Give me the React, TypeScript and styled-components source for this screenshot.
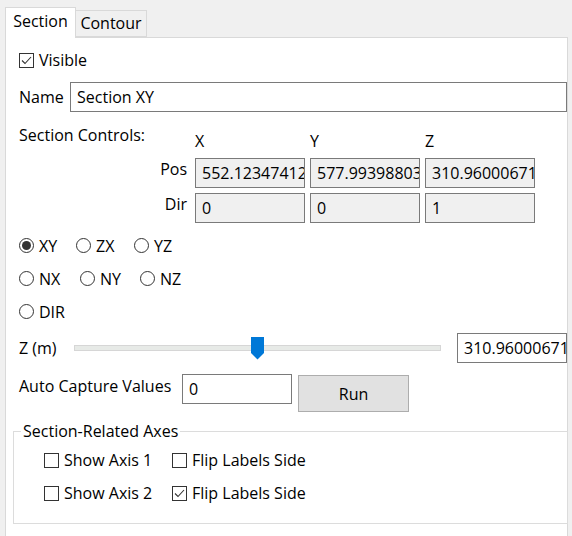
import React, { useState } from "react";
import styled, { createGlobalStyle } from "styled-components";

const GlobalStyle = createGlobalStyle`
  html, body {
    margin: 0;
    padding: 0;
    background: #f0f0f0;
    overflow: hidden;
  }
  body {
    font-family: "Open Sans", "Noto Sans", "Liberation Sans", sans-serif;
    font-size: 16px;
    color: #000;
  }
  * { box-sizing: border-box; }
`;

const Frame = styled.div`
  padding: 7px 0 0 5px;
  width: 568px;
`;

const TabStrip = styled.div`
  display: flex;
  align-items: flex-end;
  height: 30px;
  position: relative;
  z-index: 1;
`;

const Tab = styled.div<{ active?: boolean }>`
  width: 71px;
  height: ${(p) => (p.active ? "31px" : "27px")};
  margin-bottom: ${(p) => (p.active ? "-1px" : "0")};
  border: 1px solid #d9d9d9;
  border-bottom: ${(p) => (p.active ? "none" : "1px solid #d9d9d9")};
  border-left: ${(p) => (p.active ? "1px solid #d9d9d9" : "none")};
  background: ${(p) => (p.active ? "#fff" : "#f0f0f0")};
  display: flex;
  justify-content: center;
  padding-top: ${(p) => (p.active ? "2px" : "1px")};
  line-height: 22px;
`;

const Page = styled.div`
  background: #fff;
  border: 1px solid #d9d9d9;
  height: 520px;
  padding: 11px 0 0 13px;
`;

const Row = styled.div<{ h?: number; mt?: number }>`
  display: flex;
  align-items: center;
  height: ${(p) => p.h ?? 22}px;
  margin-top: ${(p) => p.mt ?? 0}px;
`;

const CheckItem = styled.label<{ w?: number }>`
  display: flex;
  align-items: center;
  gap: 5px;
  height: 22px;
  width: ${(p) => (p.w ? `${p.w}px` : "auto")};
  line-height: 22px;
`;

const Box = styled.span`
  width: 15px;
  height: 15px;
  border: 1px solid #333;
  background: #fff;
  display: flex;
  align-items: center;
  justify-content: center;
`;

const RadioItem = styled.label<{ w: number }>`
  display: flex;
  align-items: center;
  gap: 5px;
  width: ${(p) => p.w}px;
  line-height: 22px;
`;

const Circle = styled.span<{ on?: boolean }>`
  width: 15px;
  height: 15px;
  border-radius: 50%;
  border: 1px solid #333;
  display: flex;
  align-items: center;
  justify-content: center;
  &::after {
    content: "";
    width: 9px;
    height: 9px;
    border-radius: 50%;
    background: ${(p) => (p.on ? "#333" : "transparent")};
  }
`;

const Label = styled.span<{ w?: number }>`
  line-height: 22px;
  white-space: nowrap;
  ${(p) => (p.w ? `width: ${p.w}px; flex-shrink: 0;` : "")}
`;

const TextBox = styled.input<{ w?: number }>`
  font: inherit;
  color: #000;
  height: 30px;
  width: ${(p) => (p.w ? `${p.w}px` : "100%")};
  border: 1px solid #7a7a7a;
  background: ${(p) => (p.readOnly ? "#f0f0f0" : "#fff")};
  padding: 0 0 0 6px;
  outline: none;
  margin: 0;
  min-width: 0;
`;

const ControlsGrid = styled.div`
  display: grid;
  grid-template-columns: 171px 110px 110px 110px;
  grid-template-rows: 29px 30px 30px;
  column-gap: 5px;
  row-gap: 5px;
  margin-top: 12px;
`;

const GridTitle = styled.div`
  align-self: start;
  line-height: 22px;
`;

const AxisHead = styled.div`
  align-self: end;
  line-height: 22px;
  padding-bottom: 1px;
`;

const RowHead = styled.div`
  align-self: start;
  text-align: right;
  padding-right: 3px;
  line-height: 22px;
`;

const RadioBlock = styled.div`
  margin-top: 6px;
`;

const SliderWrap = styled.div`
  position: relative;
  width: 367px;
  height: 23px;
  margin-right: 16px;
`;

const Track = styled.div`
  position: absolute;
  left: 0;
  right: 0;
  top: 8px;
  height: 6px;
  background: #e7eae7;
  border: 1px solid #d6d6d6;
`;

const Thumb = styled.div`
  position: absolute;
  top: 0;
  width: 13px;
  height: 23px;
  background: #0078d7;
  clip-path: polygon(0 0, 100% 0, 100% 72%, 50% 100%, 0 72%);
`;

const FlowRow = styled.div`
  display: flex;
  align-items: flex-start;
  margin-top: 11px;
  height: 38px;
`;

const RunButton = styled.button`
  font: inherit;
  color: #000;
  width: 111px;
  height: 37px;
  margin: 1px 0 0 6px;
  background: #e1e1e1;
  border: 1px solid #adadad;
  padding: 0;
`;

const Group = styled.fieldset`
  margin: 8px 0 0 -6px;
  width: 555px;
  border: 1px solid #dcdcdc;
  padding: 0 0 19px 7px;
`;

const Legend = styled.legend`
  padding: 0 2px;
  line-height: 22px;
`;

const GroupRows = styled.div`
  display: flex;
  flex-direction: column;
  gap: 11px;
  margin: 7px 0 0 23px;
`;

const Check = ({ on }: { on?: boolean }) => (
  <Box>
    {on && (
      <svg width="13" height="13" viewBox="0 0 13 13">
        <polyline points="2,6.5 5,9.5 11,3" fill="none" stroke="#333" strokeWidth="1.1" />
      </svg>
    )}
  </Box>
);

export default function App() {
  const [axis, setAxis] = useState("XY");
  const slider = 0.5;
  const radioRows = [
    [["XY", 57], ["ZX", 58], ["YZ", 60]],
    [["NX", 61], ["NY", 60], ["NZ", 60]],
    [["DIR", 60]],
  ] as [string, number][][];

  return (
    <>
      <GlobalStyle />
      <Frame>
        <TabStrip>
          <Tab active>Section</Tab>
          <Tab>Contour</Tab>
        </TabStrip>
        <Page>
          <Row>
            <CheckItem>
              <Check on />
              Visible
            </CheckItem>
          </Row>
          <Row h={30} mt={11}>
            <Label w={51}>Name</Label>
            <TextBox defaultValue="Section XY" />
          </Row>

          <ControlsGrid>
            <GridTitle>Section Controls:</GridTitle>
            <AxisHead>X</AxisHead>
            <AxisHead>Y</AxisHead>
            <AxisHead>Z</AxisHead>
            <RowHead>Pos</RowHead>
            <TextBox readOnly value="552.123474121094" />
            <TextBox readOnly value="577.993988037109" />
            <TextBox readOnly value="310.960006713867" />
            <RowHead>Dir</RowHead>
            <TextBox readOnly value="0" />
            <TextBox readOnly value="0" />
            <TextBox readOnly value="1" />
          </ControlsGrid>

          <RadioBlock>
            {radioRows.map((row, i) => (
              <Row key={i} h={33}>
                {row.map(([name, w]) => (
                  <RadioItem key={name} w={w} onClick={() => setAxis(name)}>
                    <Circle on={axis === name} />
                    {name}
                  </RadioItem>
                ))}
              </Row>
            ))}
          </RadioBlock>

          <Row h={30} mt={5}>
            <Label w={55}>Z (m)</Label>
            <SliderWrap>
              <Track />
              <Thumb style={{ left: (367 - 13) * slider }} />
            </SliderWrap>
            <TextBox w={110} defaultValue="310.96000671" />
          </Row>

          <FlowRow>
            <Label w={163} style={{ marginTop: 1 }}>Auto Capture Values</Label>
            <TextBox w={110} defaultValue="0" />
            <RunButton>Run</RunButton>
          </FlowRow>

          <Group>
            <Legend>Section-Related Axes</Legend>
            <GroupRows>
              <Row>
                <CheckItem w={128}>
                  <Check />
                  Show Axis 1
                </CheckItem>
                <CheckItem>
                  <Check />
                  Flip Labels Side
                </CheckItem>
              </Row>
              <Row>
                <CheckItem w={128}>
                  <Check />
                  Show Axis 2
                </CheckItem>
                <CheckItem>
                  <Check on />
                  Flip Labels Side
                </CheckItem>
              </Row>
            </GroupRows>
          </Group>
        </Page>
      </Frame>
    </>
  );
}
